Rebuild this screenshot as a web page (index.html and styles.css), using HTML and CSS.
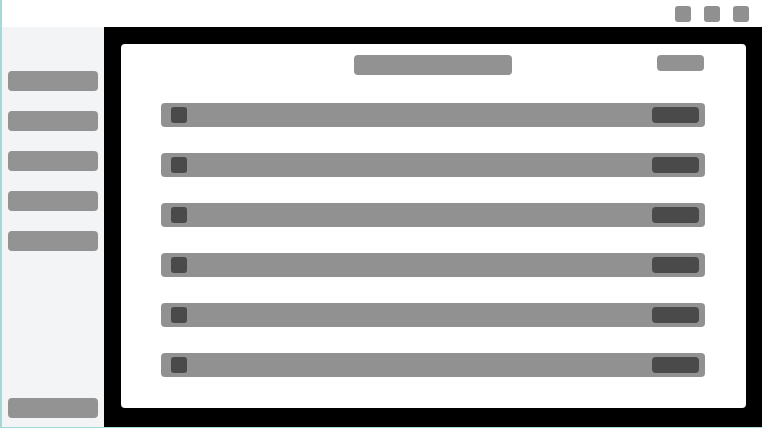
FILE: index.html
```html
<!DOCTYPE html>
<html lang="en">
<head>
    <meta charset="UTF-8">
    <meta name="viewport" content="width=device-width, initial-scale=1.0">
    <title>Wireframe</title>
    <link rel="stylesheet" href="styles.css">
</head>
<body>
    <div class="app">
        <div class="topbar">
            <span class="win-btn"></span>
            <span class="win-btn"></span>
            <span class="win-btn"></span>
        </div>
        <div class="body">
            <div class="sidebar">
                <div class="nav-item"></div>
                <div class="nav-item"></div>
                <div class="nav-item"></div>
                <div class="nav-item"></div>
                <div class="nav-item"></div>
                <div class="nav-item nav-bottom"></div>
            </div>
            <div class="main">
                <div class="card">
                    <div class="card-header">
                        <div class="title"></div>
                        <div class="action"></div>
                    </div>
                    <div class="list">
                        <div class="row"><span class="check"></span><span class="tag"></span></div>
                        <div class="row"><span class="check"></span><span class="tag"></span></div>
                        <div class="row"><span class="check"></span><span class="tag"></span></div>
                        <div class="row"><span class="check"></span><span class="tag"></span></div>
                        <div class="row"><span class="check"></span><span class="tag"></span></div>
                        <div class="row"><span class="check"></span><span class="tag"></span></div>
                    </div>
                </div>
            </div>
        </div>
    </div>
</body>
</html>
```

FILE: styles.css
```css
body {
    margin: 0;
    font-family: "Liberation Sans", Arial, sans-serif;
}
.app {
    width: 762px;
    height: 428px;
    box-sizing: border-box;
    border-left: 2px solid #a6d8d8;
    border-bottom: 1px solid #a6d8d8;
    display: flex;
    flex-direction: column;
    background-color: white;
}
.topbar {
    height: 27px;
    display: flex;
    justify-content: flex-end;
    align-items: center;
    gap: 13px;
    padding-right: 13px;
}
.win-btn {
    width: 16px;
    height: 16px;
    border-radius: 3px;
    background-color: #909090;
}
.body {
    flex: 1;
    display: flex;
}
.sidebar {
    width: 102px;
    box-sizing: border-box;
    background-color: #f3f4f6;
    padding: 44px 6px 9px 6px;
    display: flex;
    flex-direction: column;
    gap: 20px;
}
.nav-item {
    height: 20px;
    border-radius: 4px;
    background-color: #939393;
}
.nav-bottom {
    margin-top: auto;
}
.main {
    flex: 1;
    background-color: black;
    padding: 17px 16px 19px 17px;
    display: flex;
}
.card {
    flex: 1;
    background-color: white;
    border-radius: 4px;
    padding: 11px 41px 0 40px;
}
.card-header {
    display: grid;
    grid-template-columns: 1fr 158px 1fr;
    align-items: start;
}
.title {
    grid-column: 2;
    height: 20px;
    border-radius: 4px;
    background-color: #929292;
}
.action {
    grid-column: 3;
    justify-self: end;
    width: 47px;
    height: 16px;
    margin-right: 1px;
    border-radius: 4px;
    background-color: #929292;
}
.list {
    margin-top: 28px;
    display: flex;
    flex-direction: column;
    gap: 26px;
}
.row {
    height: 24px;
    border-radius: 4px;
    background-color: #919191;
    display: flex;
    align-items: center;
    justify-content: space-between;
    padding: 0 6px 0 10px;
}
.check {
    width: 16px;
    height: 16px;
    border-radius: 3px;
    background-color: #4a4a4a;
}
.tag {
    width: 47px;
    height: 16px;
    border-radius: 4px;
    background-color: #4a4a4a;
}
```
